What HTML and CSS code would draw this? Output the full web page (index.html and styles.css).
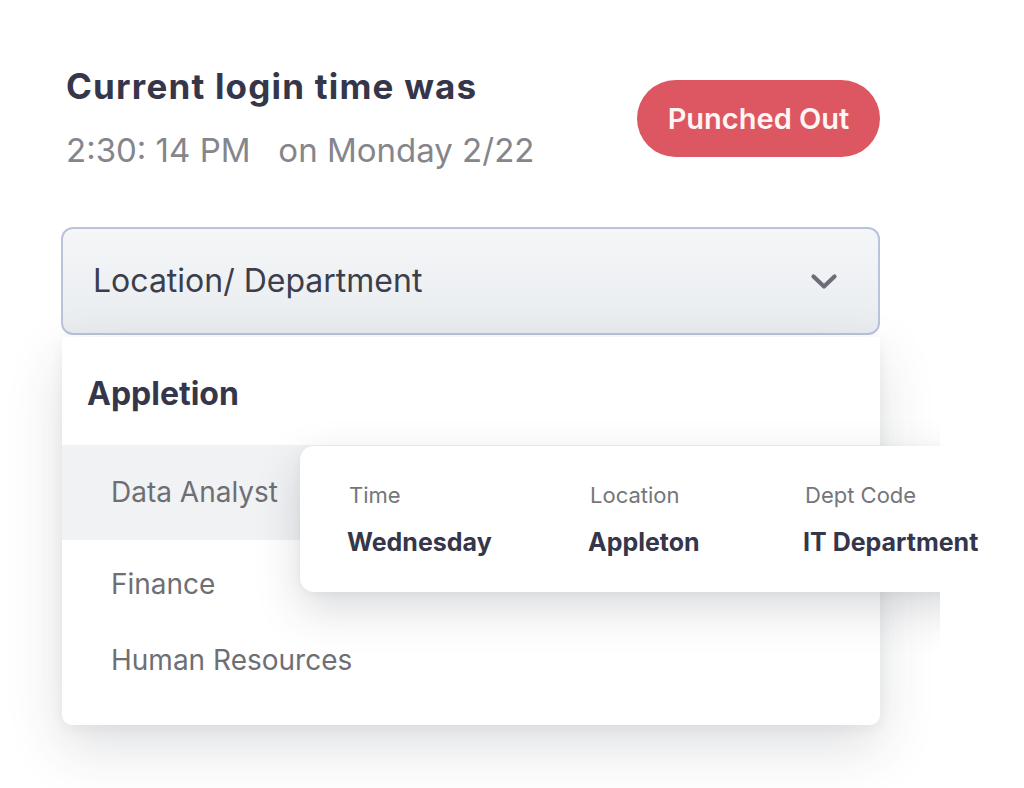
FILE: index.html
```html
<!DOCTYPE html>
<html lang="en">
<head>
<meta charset="utf-8">
<title>Login time</title>
<link rel="stylesheet" href="styles.css">
</head>
<body>
<main class="stage">
  <header class="top">
    <div class="login">
      <h1 class="login-title">Current login time was</h1>
      <p class="login-time">2:30: 14 PM &nbsp; on Monday 2/22</p>
    </div>
    <button class="status">Punched Out</button>
  </header>

  <div class="select">
    <span class="select-label">Location/ Department</span>
    <svg class="chevron" width="28" height="20" viewBox="0 0 28 20" aria-hidden="true">
      <path d="M3.5 4.5 L14 14.5 L24.5 4.5" fill="none" stroke="#6b6e76" stroke-width="4.2" stroke-linecap="round" stroke-linejoin="round"/>
    </svg>
  </div>

  <div class="panel-wrap">
    <div class="panel">
      <div class="panel-head">Appletion</div>
      <ul class="options">
        <li class="option active">Data Analyst</li>
        <li class="option finance">Finance</li>
        <li class="option hr">Human Resources</li>
      </ul>
    </div>

    <div class="tooltip">
      <div class="col col-time">
        <span class="label">Time</span>
        <span class="value">Wednesday</span>
      </div>
      <div class="col col-loc">
        <span class="label">Location</span>
        <span class="value">Appleton</span>
      </div>
      <div class="col">
        <span class="label">Dept Code</span>
        <span class="value">IT Department</span>
      </div>
    </div>
  </div>
</main>
</body>
</html>
```

FILE: styles.css
```css
* { box-sizing: border-box; }

html, body {
  margin: 0;
  padding: 0;
  background: #ffffff;
  overflow: hidden;
  height: 788px;
}

body {
  font-family: "Inter", "Noto Sans", sans-serif;
  color: #35364a;
}

.stage {
  width: 818px;
  margin-left: 62px;
  padding-top: 64px;
}

.top {
  display: flex;
  justify-content: space-between;
  align-items: flex-start;
}

.login-title {
  margin: 0 0 0 4px;
  font-size: 35px;
  line-height: 44px;
  font-weight: 700;
  letter-spacing: 1.2px;
  color: #35364a;
  white-space: nowrap;
}

.login-time {
  margin: 22px 0 0 4px;
  font-size: 33px;
  line-height: 40px;
  font-weight: 400;
  color: #85868b;
}

.status {
  margin-top: 16px;
  width: 243px;
  height: 77px;
  border: none;
  border-radius: 39px;
  background: #dc5761;
  color: #fff5f3;
  font-family: inherit;
  font-size: 29px;
  font-weight: 600;
}

.select {
  margin-top: 57px;
  margin-left: -1px;
  height: 108px;
  border: 2px solid #b9c3da;
  border-radius: 12px;
  background: linear-gradient(180deg, #f4f6f8 0%, #e9ecef 100%);
  display: flex;
  align-items: center;
  justify-content: space-between;
  padding: 0 40px 2px 30px;
}

.select-label {
  font-size: 32px;
  color: #3c3e4b;
}

.chevron { margin-top: 4px; }

.panel-wrap {
  position: relative;
  margin-top: 2px;
}

.panel {
  background: #ffffff;
  border-radius: 0 0 10px 10px;
  box-shadow: 0 22px 55px rgba(40, 45, 60, 0.15), 0 4px 14px rgba(40, 45, 60, 0.05);
  clip-path: inset(-80px -60px -80px -80px);
  height: 388px;
}

.panel-head {
  height: 108px;
  display: flex;
  align-items: center;
  padding-left: 25px;
  padding-top: 4px;
  font-size: 32px;
  font-weight: 700;
  color: #35364a;
}

.options {
  list-style: none;
  margin: 0;
  padding: 0;
}

.option {
  display: flex;
  align-items: center;
  padding-left: 49px;
  font-size: 28px;
  color: #6e6f74;
}

.option.active {
  height: 95px;
  background: #f0f2f4;
  padding-bottom: 2px;
}

.option.finance { height: 88px; }
.option.hr { height: 64px; }

.tooltip {
  position: absolute;
  left: 238px;
  top: 109px;
  width: 800px;
  height: 146px;
  background: #ffffff;
  border-radius: 14px 0 0 14px;
  box-shadow: 0 18px 45px rgba(40, 45, 60, 0.17), 0 2px 10px rgba(40, 45, 60, 0.05);
  clip-path: polygon(-60px -60px, 640px -60px, 640px 0, 100% 0, 100% 100%, 640px 100%, 640px calc(100% + 80px), -60px calc(100% + 80px));
  display: flex;
  padding: 34px 0 0 47px;
}

.col {
  display: flex;
  flex-direction: column;
  gap: 17px;
}

.col-time { width: 241px; }
.col-loc { width: 215px; }

.label {
  font-size: 22px;
  line-height: 30px;
  color: #75767b;
  padding-left: 2px;
}

.value {
  font-size: 25px;
  line-height: 30px;
  font-weight: 700;
  color: #35364a;
  white-space: nowrap;
}
```
